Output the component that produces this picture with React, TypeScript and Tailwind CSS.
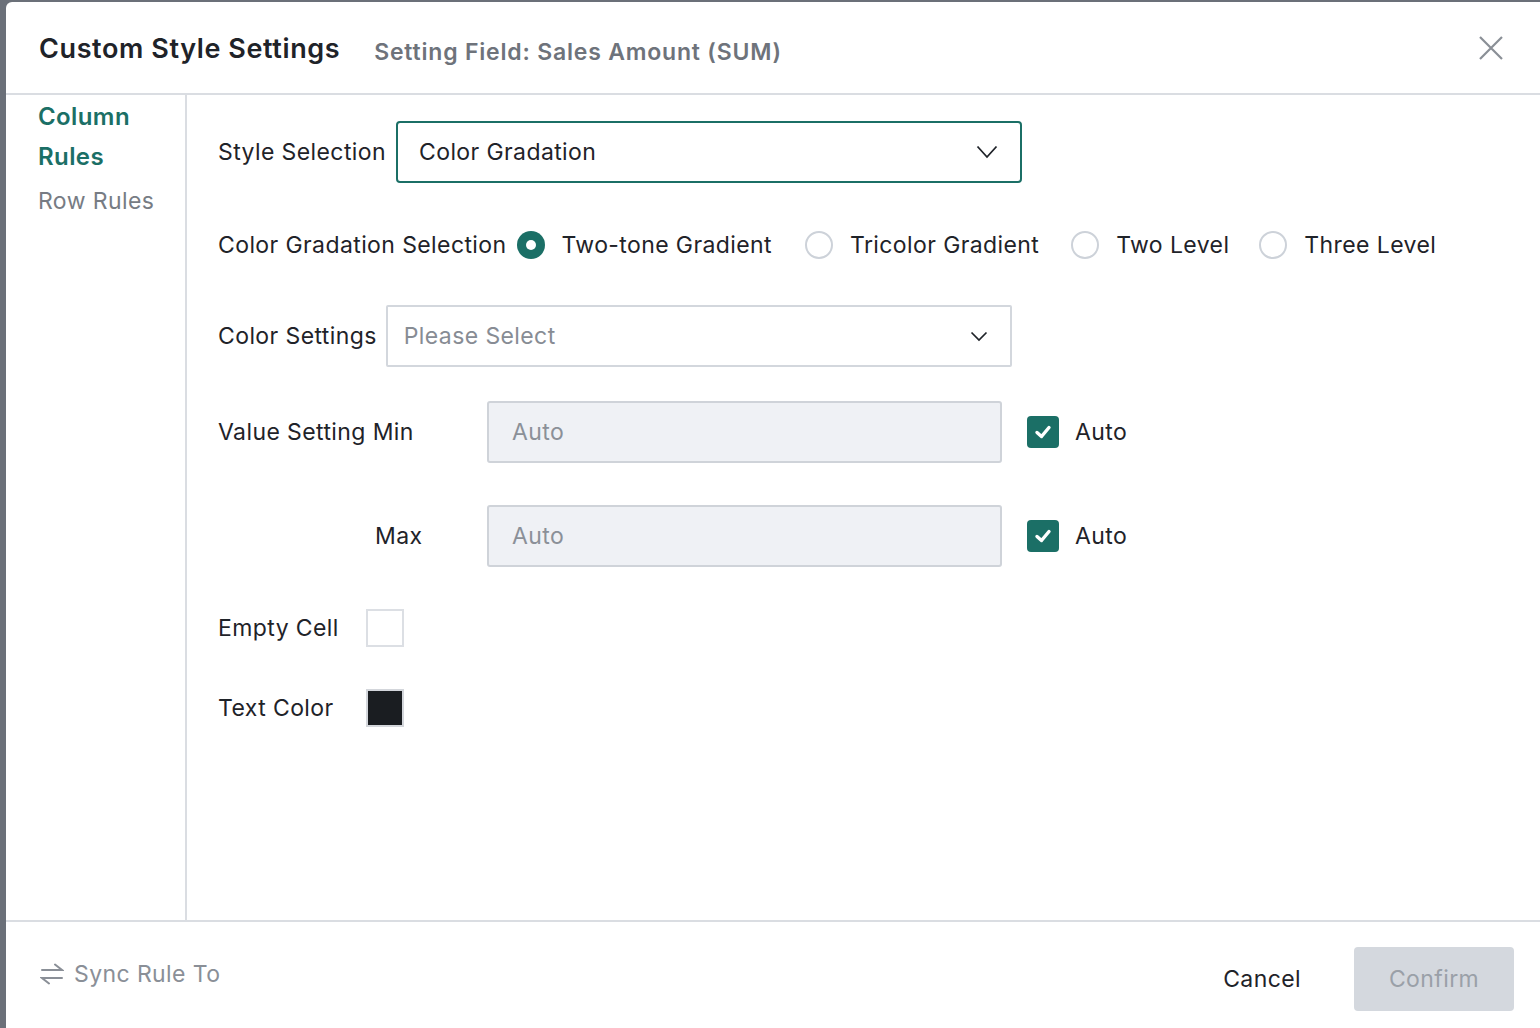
import React from 'react';

const font = { fontFamily: 'Inter, "Noto Sans", sans-serif' };

const Chevron = ({ big }: { big?: boolean }) =>
  big ? (
    <svg width="22" height="14" viewBox="0 0 22 14" fill="none" stroke="#1f2329" strokeWidth="1.8">
      <path d="M1.5 1.5 L11 12 L20.5 1.5" />
    </svg>
  ) : (
    <svg width="18" height="11" viewBox="0 0 18 11" fill="none" stroke="#1f2329" strokeWidth="1.7">
      <path d="M1.5 1.5 L9 9 L16.5 1.5" />
    </svg>
  );

const Radio = ({ checked, label }: { checked?: boolean; label: string }) => (
  <div className="flex items-center">
    {checked ? (
      <span className="flex h-[28px] w-[28px] items-center justify-center rounded-full bg-[#1b6f66]">
        <span className="h-[10px] w-[10px] rounded-full bg-white" />
      </span>
    ) : (
      <span className="h-[28px] w-[28px] rounded-full border-2 border-[#cdd2d9] bg-white" />
    )}
    <span className="ml-[17px]">{label}</span>
  </div>
);

const Check = () => (
  <span className="flex h-[32px] w-[32px] items-center justify-center rounded-[4px] bg-[#1b6f66]">
    <svg width="20" height="16" viewBox="0 0 20 16" fill="none" stroke="white" strokeWidth="3.4" strokeLinecap="round" strokeLinejoin="round">
      <path d="M4 8.5 L8.5 12.5 L16 3.5" />
    </svg>
  </span>
);

const AutoInput = () => (
  <div className="flex h-[62px] w-[515px] items-center rounded-[3px] border-2 border-[#cfd3d9] bg-[#eff1f5] pl-[23px] text-[#8b9098]">
    Auto
  </div>
);

export default function App() {
  return (
    <div className="h-[1028px] w-full overflow-hidden bg-[#6b7079] pl-[6px] pt-[2px]" style={font}>
      <div className="flex h-[1040px] flex-col rounded-tl-[6px] bg-white text-[23px] tracking-[0.4px] text-[#1f2329]">
        {/* header */}
        <div className="flex h-[93px] shrink-0 items-center border-b-2 border-[#dadde2] pl-[33px] pr-[37px] pt-[3px]">
          <span className="text-[27px] font-semibold tracking-[0.6px]">Custom Style Settings</span>
          <span className="ml-[34px] mt-[6px] text-[23px] font-semibold tracking-[0.8px] text-[#6e737b]">
            Setting Field: Sales Amount (SUM)
          </span>
          <svg className="-mt-[3px] ml-auto" width="24" height="24" viewBox="0 0 24 24" fill="none" stroke="#8a8f96" strokeWidth="2.2">
            <path d="M1 1 L23 23 M23 1 L1 23" />
          </svg>
        </div>

        {/* body */}
        <div className="flex h-[827px] shrink-0 border-b-2 border-[#dadde2]">
          <div className="w-[181px] shrink-0 border-r-2 border-[#dadde2] pl-[32px] pt-[2px]">
            <div className="text-[24px] font-semibold leading-[40px] text-[#1b6f66]">
              Column
              <br />
              Rules
            </div>
            <div className="mt-[4px] leading-[40px] text-[#777c84]">Row Rules</div>
          </div>

          <div className="flex flex-col pl-[31px] pt-[26px]">
            <div className="flex h-[62px] items-center">
              <span>Style Selection</span>
              <div className="ml-[10px] flex h-[62px] w-[626px] items-center justify-between rounded-[4px] border-2 border-[#1b6f66] pl-[21px] pr-[22px]">
                <span>Color Gradation</span>
                <Chevron big />
              </div>
            </div>

            <div className="mt-[48px] flex h-[28px] items-center">
              <span className="mr-[10px]">Color Gradation Selection</span>
              <Radio checked label="Two-tone Gradient" />
              <div className="ml-[33px]">
                <Radio label="Tricolor Gradient" />
              </div>
              <div className="ml-[32px]">
                <Radio label="Two Level" />
              </div>
              <div className="ml-[30px]">
                <Radio label="Three Level" />
              </div>
            </div>

            <div className="mt-[46px] flex h-[62px] items-center">
              <span>Color Settings</span>
              <div className="ml-[9px] flex h-[62px] w-[626px] items-center justify-between rounded-[2px] border-2 border-[#d3d7dd] pl-[16px] pr-[22px]">
                <span className="text-[#878c94]">Please Select</span>
                <Chevron />
              </div>
            </div>

            <div className="mt-[34px] flex h-[62px] items-center">
              <span className="w-[269px]">Value Setting Min</span>
              <AutoInput />
              <div className="ml-[25px]">
                <Check />
              </div>
              <span className="ml-[16px]">Auto</span>
            </div>

            <div className="mt-[42px] flex h-[62px] items-center">
              <span className="w-[269px] pl-[157px]">Max</span>
              <AutoInput />
              <div className="ml-[25px]">
                <Check />
              </div>
              <span className="ml-[16px]">Auto</span>
            </div>

            <div className="mt-[42px] flex h-[38px] items-center">
              <span className="w-[148px]">Empty Cell</span>
              <span className="h-[38px] w-[38px] border-2 border-[#dcdfe4] bg-white" />
            </div>

            <div className="mt-[42px] flex h-[38px] items-center">
              <span className="w-[148px]">Text Color</span>
              <span className="h-[38px] w-[38px] border-2 border-[#d3d6db] bg-[#1a1d21]" />
            </div>
          </div>
        </div>

        {/* footer */}
        <div className="flex items-center pl-[34px] pr-[26px] pt-[25px]">
          <div className="-mt-[10px] flex items-center text-[#8a8f97]">
            <svg width="24" height="22" viewBox="0 0 24 22" fill="none" stroke="#8a8f97" strokeWidth="2" strokeLinecap="round">
              <path d="M2 7 H22 L15 1.5" />
              <path d="M22 15 H2 L9 20.5" />
            </svg>
            <span className="ml-[10px]">Sync Rule To</span>
          </div>
          <span className="ml-auto mr-[53px]">Cancel</span>
          <div className="flex h-[64px] w-[160px] items-center justify-center rounded-[4px] bg-[#d4d8de] text-[#9aa0a8]">
            Confirm
          </div>
        </div>
      </div>
    </div>
  );
}
